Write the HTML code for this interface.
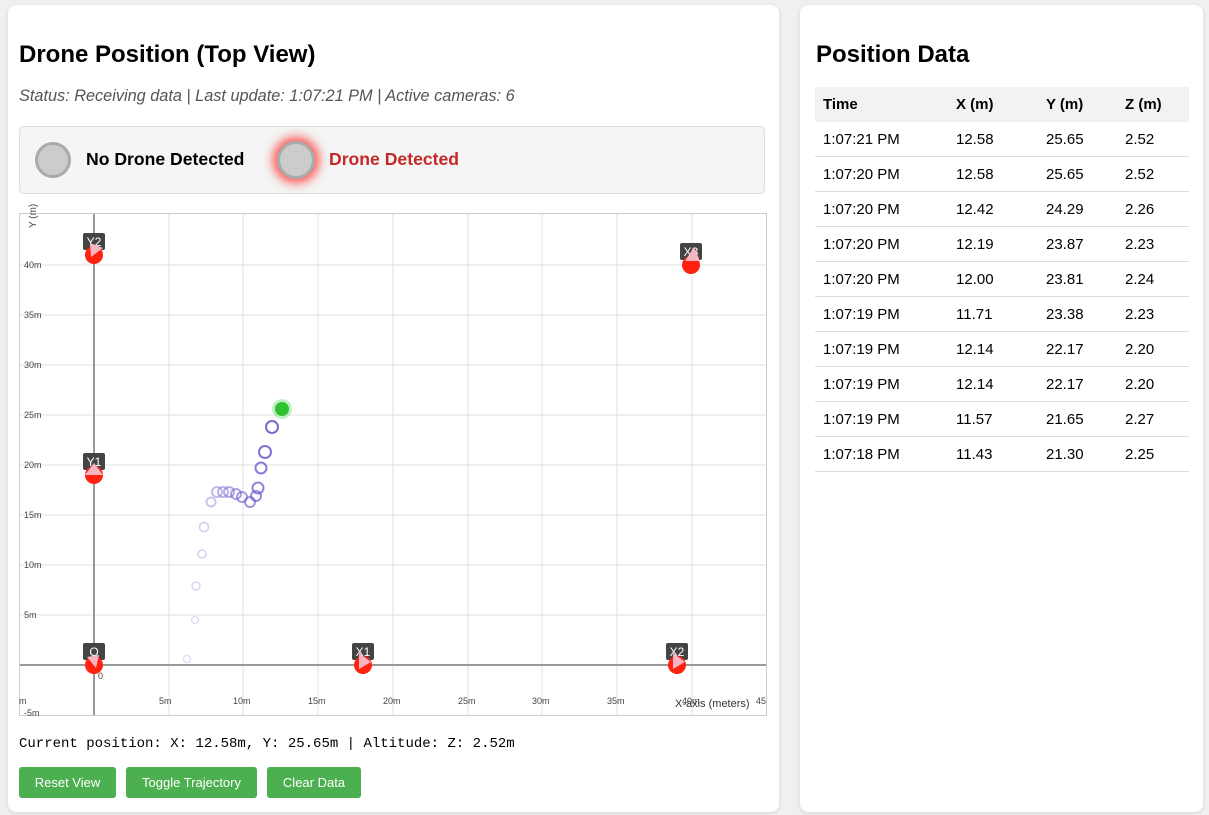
<!DOCTYPE html><html><head><style>
body{margin:0;background:#f0f0f0;font-family:"Liberation Sans",sans-serif;width:1209px;height:815px;overflow:hidden;position:relative}
.card{position:absolute;background:#fff;border-radius:8px;box-shadow:0 1px 4px rgba(0,0,0,.12)}
h2{margin:0;font-size:24px;font-weight:bold;position:absolute}
.btn{position:absolute;top:767px;height:31px;background:#4caf50;color:#fff;font-size:13px;line-height:31px;text-align:center;border-radius:3px}
table{border-collapse:collapse;position:absolute;left:815px;top:87px;width:374px;font-size:15px}
th{background:#f2f2f2;text-align:left;height:35px;padding:0 8px;font-weight:bold}
td{height:34px;padding:0 8px;border-bottom:1px solid #ddd}
</style></head><body>
<div class="card" style="left:8px;top:5px;width:771px;height:807px"></div>
<div class="card" style="left:800px;top:5px;width:403px;height:807px"></div>
<h2 style="left:19px;top:41px">Drone Position (Top View)</h2>
<div style="position:absolute;left:19px;top:87px;font-size:16.3px;font-style:italic;color:#555">Status: Receiving data | Last update: 1:07:21 PM | Active cameras: 6</div>
<div style="position:absolute;left:19px;top:126px;width:744px;height:66px;background:#f5f5f5;border:1px solid #ddd;border-radius:5px"></div>
<div style="position:absolute;left:35px;top:142px;width:36px;height:36px;border-radius:50%;background:#ccc;border:3px solid #aaa;box-sizing:border-box"></div>
<div style="position:absolute;left:86px;top:149px;font-size:17.6px;font-weight:bold">No Drone Detected</div>
<div style="position:absolute;left:277px;top:141px;width:38px;height:38px;border-radius:50%;background:#ccc;border:3px solid #aaa;box-sizing:border-box;box-shadow:0 0 10px 4px rgba(255,40,40,.8)"></div>
<div style="position:absolute;left:329px;top:149px;font-size:17.6px;font-weight:bold;color:#c62828">Drone Detected</div>
<svg style="position:absolute;left:0;top:0" width="1209" height="815" font-family="Liberation Sans" font-size="9" fill="#444">
<rect x="19.5" y="213.5" width="747" height="502" fill="#fff" stroke="#ccc"/>
<g stroke="#e2e2e2">
<line x1="169" y1="214" x2="169" y2="715"/><line x1="243" y1="214" x2="243" y2="715"/><line x1="318" y1="214" x2="318" y2="715"/><line x1="393" y1="214" x2="393" y2="715"/><line x1="468" y1="214" x2="468" y2="715"/><line x1="542" y1="214" x2="542" y2="715"/><line x1="617" y1="214" x2="617" y2="715"/><line x1="692" y1="214" x2="692" y2="715"/>
<line x1="20" y1="265" x2="766" y2="265"/><line x1="20" y1="315" x2="766" y2="315"/><line x1="20" y1="365" x2="766" y2="365"/><line x1="20" y1="415" x2="766" y2="415"/><line x1="20" y1="465" x2="766" y2="465"/><line x1="20" y1="515" x2="766" y2="515"/><line x1="20" y1="565" x2="766" y2="565"/><line x1="20" y1="615" x2="766" y2="615"/>
</g>
<line x1="94" y1="214" x2="94" y2="715" stroke="#999" stroke-width="2"/>
<line x1="20" y1="665" x2="766" y2="665" stroke="#999" stroke-width="2"/>
<text x="24" y="268">40m</text><text x="24" y="318">35m</text><text x="24" y="368">30m</text><text x="24" y="418">25m</text><text x="24" y="468">20m</text><text x="24" y="518">15m</text><text x="24" y="568">10m</text><text x="24" y="618">5m</text><text x="24" y="716">-5m</text>
<text x="19" y="704">m</text><text x="159" y="704">5m</text><text x="233" y="704">10m</text><text x="308" y="704">15m</text><text x="383" y="704">20m</text><text x="458" y="704">25m</text><text x="532" y="704">30m</text><text x="607" y="704">35m</text><text x="682" y="704">40m</text><text x="756" y="704">45</text>
<text x="98" y="679">0</text>
<text x="675" y="707" font-size="11" fill="#333">X-axis (meters)</text>
<text x="36" y="228" font-size="10" transform="rotate(-90 36 228)">Y (m)</text>
<g fill="none" stroke="#6a5acd">
<circle cx="272" cy="427" r="6" stroke-opacity=".9" stroke-width="2"/>
<circle cx="265" cy="452" r="6" stroke-opacity=".85" stroke-width="2"/>
<circle cx="261" cy="468" r="5.5" stroke-opacity=".8" stroke-width="2"/>
<circle cx="258" cy="488" r="5.5" stroke-opacity=".75" stroke-width="2"/>
<circle cx="256" cy="496" r="5" stroke-opacity=".7" stroke-width="2"/>
<circle cx="250" cy="502" r="5" stroke-opacity=".65" stroke-width="2"/>
<circle cx="242" cy="497" r="5" stroke-opacity=".6" stroke-width="2"/>
<circle cx="236" cy="494" r="5" stroke-opacity=".55" stroke-width="2"/>
<circle cx="229" cy="492" r="5" stroke-opacity=".5" stroke-width="2"/>
<circle cx="223" cy="492" r="5" stroke-opacity=".45" stroke-width="2"/>
<circle cx="217" cy="492" r="5" stroke-opacity=".4" stroke-width="2"/>
<circle cx="211" cy="502" r="4.5" stroke-opacity=".35" stroke-width="2"/>
<circle cx="204" cy="527" r="4.5" stroke-opacity=".3" stroke-width="1.5"/>
<circle cx="202" cy="554" r="4" stroke-opacity=".28" stroke-width="1.5"/>
<circle cx="196" cy="586" r="4" stroke-opacity=".25" stroke-width="1.5"/>
<circle cx="195" cy="620" r="3.5" stroke-opacity=".22" stroke-width="1.5"/>
<circle cx="187" cy="659" r="3.5" stroke-opacity=".2" stroke-width="1.5"/>
</g>
<circle cx="282" cy="409" r="10" fill="#2ecc40" fill-opacity=".3"/>
<circle cx="282" cy="409" r="7" fill="#2ec22e"/>
<g>
<g transform="translate(94,665)"><rect x="-11" y="-22" width="22" height="17" rx="2" fill="#444"/><text x="0" y="-9" text-anchor="middle" fill="#fff" font-size="12">O</text><circle r="9" fill="#f21"/><polygon points="-7,-8 5,-10 2,3" fill="#f8b4c0"/></g>
<g transform="translate(363,665)"><rect x="-11" y="-22" width="22" height="17" rx="2" fill="#444"/><text x="0" y="-9" text-anchor="middle" fill="#fff" font-size="12">X1</text><circle r="9" fill="#f21"/><polygon points="-4,-12 8,-3 -4,4" fill="#f8b4c0"/></g>
<g transform="translate(677,665)"><rect x="-11" y="-22" width="22" height="17" rx="2" fill="#444"/><text x="0" y="-9" text-anchor="middle" fill="#fff" font-size="12">X2</text><circle r="9" fill="#f21"/><polygon points="-4,-12 8,-3 -4,4" fill="#f8b4c0"/></g>
<g transform="translate(94,475)"><rect x="-11" y="-22" width="22" height="17" rx="2" fill="#444"/><text x="0" y="-9" text-anchor="middle" fill="#fff" font-size="12">Y1</text><circle r="9" fill="#f21"/><polygon points="0,-12 9,0 -9,0" fill="#f8b4c0"/></g>
<g transform="translate(94,255)"><rect x="-11" y="-22" width="22" height="17" rx="2" fill="#444"/><text x="0" y="-9" text-anchor="middle" fill="#fff" font-size="12">Y2</text><circle r="9" fill="#f21"/><polygon points="-4,-12 9,-7 -3,2" fill="#f8b4c0"/></g>
<g transform="translate(691,265)"><rect x="-11" y="-22" width="22" height="17" rx="2" fill="#444"/><text x="0" y="-9" text-anchor="middle" fill="#fff" font-size="12">X3</text><circle r="9" fill="#f21"/><polygon points="-6,-4 3,-18 9,-4" fill="#f8b4c0"/></g>
</g>
</svg>
<div style="position:absolute;left:19px;top:736px;font-family:'Liberation Mono',monospace;font-size:14px">Current position: X: 12.58m, Y: 25.65m | Altitude: Z: 2.52m</div>
<div class="btn" style="left:19px;width:97px">Reset View</div>
<div class="btn" style="left:126px;width:131px">Toggle Trajectory</div>
<div class="btn" style="left:267px;width:94px">Clear Data</div>
<h2 style="left:816px;top:41px">Position Data</h2>
<table>
<tr><th style="width:117px">Time</th><th style="width:74px">X (m)</th><th style="width:63px">Y (m)</th><th>Z (m)</th></tr>
<tr><td>1:07:21 PM</td><td>12.58</td><td>25.65</td><td>2.52</td></tr>
<tr><td>1:07:20 PM</td><td>12.58</td><td>25.65</td><td>2.52</td></tr>
<tr><td>1:07:20 PM</td><td>12.42</td><td>24.29</td><td>2.26</td></tr>
<tr><td>1:07:20 PM</td><td>12.19</td><td>23.87</td><td>2.23</td></tr>
<tr><td>1:07:20 PM</td><td>12.00</td><td>23.81</td><td>2.24</td></tr>
<tr><td>1:07:19 PM</td><td>11.71</td><td>23.38</td><td>2.23</td></tr>
<tr><td>1:07:19 PM</td><td>12.14</td><td>22.17</td><td>2.20</td></tr>
<tr><td>1:07:19 PM</td><td>12.14</td><td>22.17</td><td>2.20</td></tr>
<tr><td>1:07:19 PM</td><td>11.57</td><td>21.65</td><td>2.27</td></tr>
<tr><td>1:07:18 PM</td><td>11.43</td><td>21.30</td><td>2.25</td></tr>
</table>
</body></html>
